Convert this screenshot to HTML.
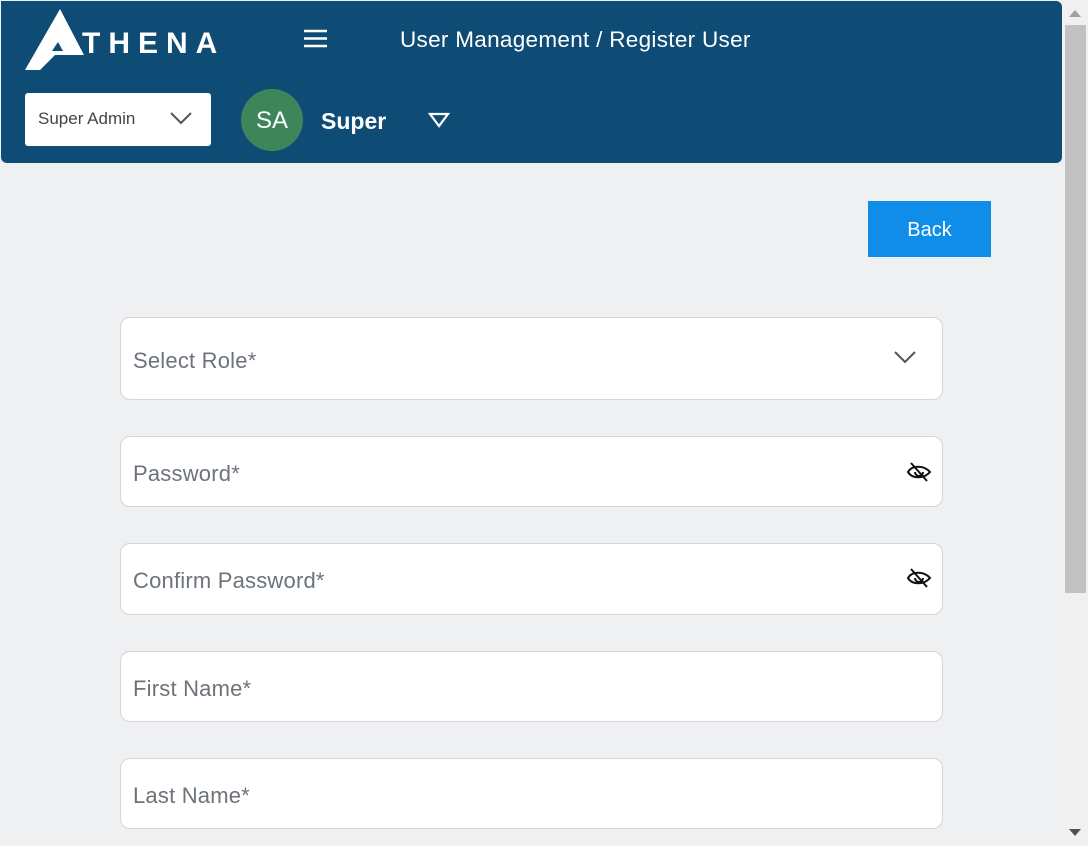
<!DOCTYPE html>
<html><head><meta charset="utf-8"><style>
*{box-sizing:border-box;margin:0;padding:0}
body{width:1088px;height:846px;background:#eff0f2;font-family:"Liberation Sans",sans-serif;position:relative;overflow:hidden}
.hdr{position:absolute;left:1px;top:1px;width:1061px;height:162px;background:#0f4c75;border-radius:0 6px 6px 6px}
.t{position:absolute;color:#fff}
.sel{position:absolute;left:25px;top:93px;width:186px;height:53px;background:#fff;border-radius:3px;font-size:17px;color:#444;padding:16px 0 0 13px}
.av{position:absolute;left:241px;top:89px;width:62px;height:62px;border-radius:50%;background:#3f855a;color:#fff;font-size:24px;text-align:center;line-height:64px}
.back{position:absolute;left:868px;top:201px;width:123px;height:56px;background:#0f8de8;color:#fff;font-size:20px;text-align:center;line-height:58px}
.f{position:absolute;left:120px;width:823px;background:#fff;border:1px solid #d3d5d9;border-radius:10px;font-size:22px;color:#6c737a;padding-left:12px;letter-spacing:0.2px}
.sb{position:absolute;left:1063px;top:0;width:25px;height:846px;background:#f0f0f0}
.th{position:absolute;left:1065px;top:25px;width:21px;height:568px;background:#c1c1c1}
</style></head><body>
<div class="hdr"></div>
<svg style="position:absolute;left:0;top:0" width="100" height="75" viewBox="0 0 100 75"><path d="M60 9 L84 55 L55 55 L40 70 L25 70 Z M58 42 L52 51 L63 51 Z" fill="#fff" fill-rule="evenodd"/></svg>
<div class="t" style="left:82px;top:27px;font-size:30px;font-weight:bold;letter-spacing:8px">THENA</div>
<svg style="position:absolute;left:303px;top:29px" width="25" height="19"><path d="M1 2H24M1 9.5H24M1 17H24" stroke="#fff" stroke-width="2.5"/></svg>
<div class="t" style="left:400px;top:27px;font-size:22.5px;letter-spacing:0.3px">User Management / Register User</div>
<div class="sel">Super Admin</div>
<svg style="position:absolute;left:170px;top:112px" width="22" height="14"><path d="M1 1L11 11L21 1" stroke="#555" stroke-width="2" fill="none"/></svg>
<div class="av">SA</div>
<div class="t" style="left:321px;top:108px;font-size:23px;font-weight:bold">Super</div>
<svg style="position:absolute;left:428px;top:112px" width="22" height="16"><path d="M2 2H20L11 14Z" stroke="#fff" stroke-width="2.2" fill="none"/></svg>
<div class="back">Back</div>
<div class="f" style="top:317px;height:83px;line-height:85px">Select Role*</div>
<svg style="position:absolute;left:893px;top:350px" width="24" height="15"><path d="M2 2L12 12L22 2" stroke="#555" stroke-width="2" fill="none"/></svg>
<div class="f" style="top:436px;height:71px;line-height:73px">Password*</div>
<div class="f" style="top:543px;height:72px;line-height:74px">Confirm Password*</div>
<div class="f" style="top:651px;height:71px;line-height:73px">First Name*</div>
<div class="f" style="top:758px;height:71px;line-height:73px">Last Name*</div>
<svg style="position:absolute;left:906px;top:461px" width="26" height="22" viewBox="0 0 26 22"><path d="M2 11C6 4 18 4 24 11C18 18 6 18 2 11Z M9 11a4 4 0 0 0 8 0" stroke="#111" stroke-width="2" fill="none"/><path d="M5 2L21 20" stroke="#111" stroke-width="2"/></svg>
<svg style="position:absolute;left:906px;top:567px" width="26" height="22" viewBox="0 0 26 22"><path d="M2 11C6 4 18 4 24 11C18 18 6 18 2 11Z M9 11a4 4 0 0 0 8 0" stroke="#111" stroke-width="2" fill="none"/><path d="M5 2L21 20" stroke="#111" stroke-width="2"/></svg>
<div class="sb"></div><div class="th"></div>
<svg style="position:absolute;left:1069px;top:10px" width="12" height="7"><path d="M0 7L6 0L12 7Z" fill="#a0a0a0"/></svg>
<svg style="position:absolute;left:1069px;top:829px" width="12" height="7"><path d="M0 0L6 7L12 0Z" fill="#505050"/></svg>
</body></html>
